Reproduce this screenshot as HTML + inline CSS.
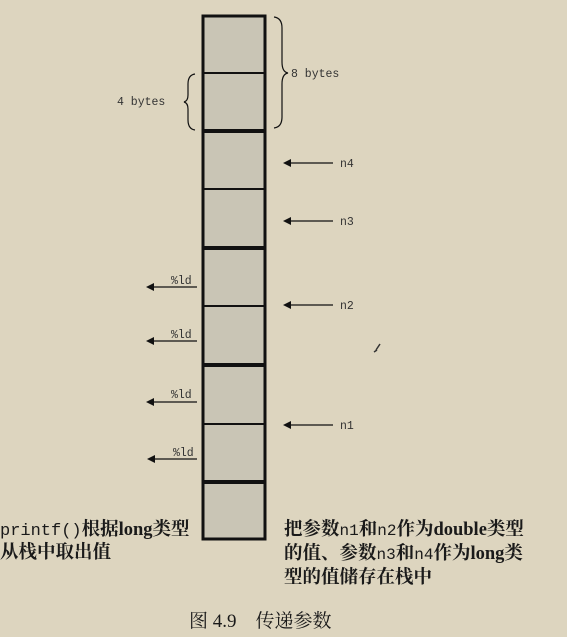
<!DOCTYPE html>
<html><head><meta charset="utf-8"><style>
html,body{margin:0;padding:0;background:#ddd5bf;}
body{width:567px;height:637px;position:relative;overflow:hidden;}
.t{position:absolute;font-family:"Liberation Serif","Noto Serif CJK SC",serif;font-size:18.5px;color:#1a1a1a;white-space:nowrap;font-weight:bold;}
.m{font-family:"Liberation Mono",monospace;font-weight:normal;}
</style></head><body>
<svg width="567" height="637" style="position:absolute;left:0;top:0" font-family="Liberation Mono, monospace" font-size="11.5" fill="#333">
<rect x="203" y="16" width="62" height="523" fill="#c9c5b5"/>
<g stroke="#111" fill="none">
<rect x="203" y="16" width="62" height="523" stroke-width="3"/>
<line x1="203" y1="73" x2="265" y2="73" stroke-width="2"/>
<line x1="203" y1="131" x2="265" y2="131" stroke-width="4"/>
<line x1="203" y1="189" x2="265" y2="189" stroke-width="2"/>
<line x1="203" y1="248" x2="265" y2="248" stroke-width="4"/>
<line x1="203" y1="306" x2="265" y2="306" stroke-width="2"/>
<line x1="203" y1="365" x2="265" y2="365" stroke-width="4"/>
<line x1="203" y1="424" x2="265" y2="424" stroke-width="2"/>
<line x1="203" y1="482" x2="265" y2="482" stroke-width="4"/>
<path d="M274 17 Q282 18 282 28 L282 62 Q282 72 288 73 Q282 74 282 84 L282 117 Q282 127 274 128" stroke-width="1.2"/>
<path d="M195 74 Q188 75 188 84 L188 95 Q188 101 184 102 Q188 103 188 109 L188 120 Q188 129 195 130" stroke-width="1.2"/>
<g stroke-width="1.3">
<line x1="288" y1="163" x2="333" y2="163"/><line x1="288" y1="221" x2="333" y2="221"/>
<line x1="288" y1="305" x2="333" y2="305"/><line x1="288" y1="425" x2="333" y2="425"/>
<line x1="152" y1="287" x2="197" y2="287"/><line x1="152" y1="341" x2="197" y2="341"/>
<line x1="152" y1="402" x2="197" y2="402"/><line x1="153" y1="459" x2="197" y2="459"/>
</g></g>
<g fill="#111">
<path d="M283 163 l8 -4 v8z"/><path d="M283 221 l8 -4 v8z"/><path d="M283 305 l8 -4 v8z"/><path d="M283 425 l8 -4 v8z"/>
<path d="M146 287 l8 -4 v8z"/><path d="M146 341 l8 -4 v8z"/><path d="M146 402 l8 -4 v8z"/><path d="M147 459 l8 -4 v8z"/>
</g>
<text x="291" y="77">8 bytes</text>
<text x="117" y="105">4 bytes</text>
<text x="340" y="167">n4</text><text x="340" y="225">n3</text><text x="340" y="309">n2</text><text x="340" y="429">n1</text>
<text x="171" y="284">%ld</text><text x="171" y="338">%ld</text><text x="171" y="398">%ld</text><text x="173" y="456">%ld</text>
<path d="M376 350 l4 -6 M374 352 l3 -2" stroke="#333" stroke-width="1.5"/>
</svg>
<div class="t" style="left:0;top:515px"><span class="m" style="font-size:17px">printf()</span>根据long类型</div>
<div class="t" style="left:0;top:538px">从栈中取出值</div>
<div class="t" style="left:284px;top:515px">把参数<span class="m" style="font-size:16px">n1</span>和<span class="m" style="font-size:16px">n2</span>作为double类型</div>
<div class="t" style="left:284px;top:539px">的值、参数<span class="m" style="font-size:16px">n3</span>和<span class="m" style="font-size:16px">n4</span>作为long类</div>
<div class="t" style="left:284px;top:563px">型的值储存在栈中</div>
<div class="t" style="left:189px;top:606px;font-weight:normal;font-size:19px">图 4.9&nbsp;&nbsp;&nbsp;&nbsp;传递参数</div>
</body></html>
